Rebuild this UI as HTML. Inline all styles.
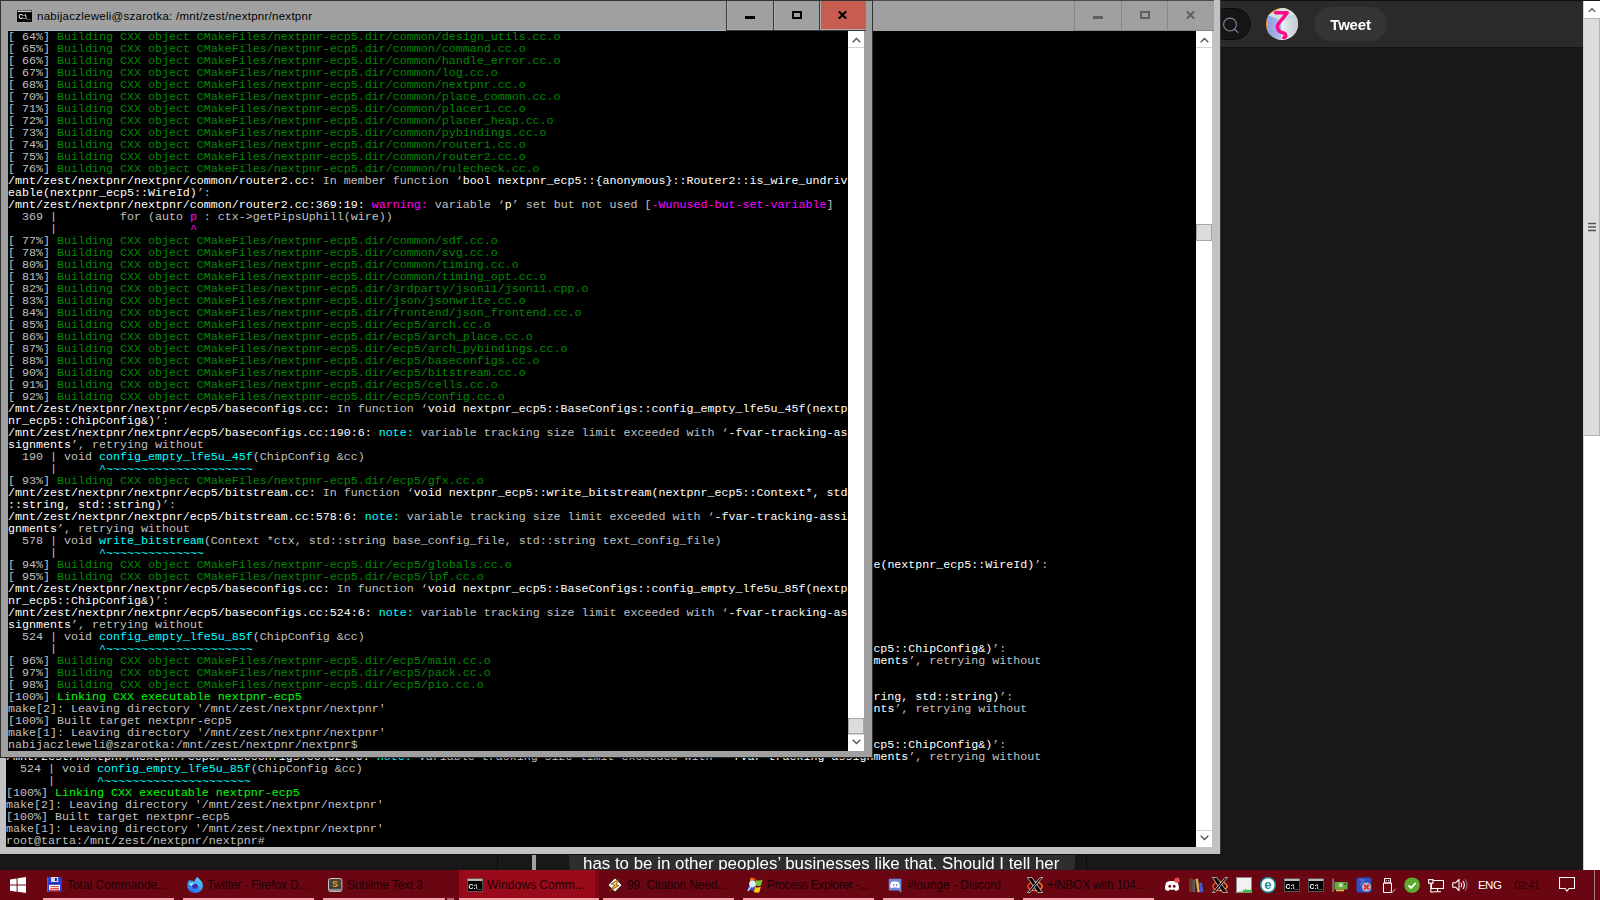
<!DOCTYPE html>
<html lang="en"><head><meta charset="utf-8"><title>nabijaczleweli@szarotka: /mnt/zest/nextpnr/nextpnr</title>
<style>
html,body{margin:0;padding:0}
body{width:1600px;height:900px;overflow:hidden;position:relative;background:#181818;font-family:"Liberation Sans",sans-serif}
.abs,.abs>*{position:absolute}
/* firefox / twitter behind */
#ff{left:0;top:0;width:1600px;height:870px;background:#181818}
#ffhead{left:0;top:0;width:1583px;height:48px;background:#2a2a2a;border-top:1px solid #0e0e0e;border-bottom:1px solid #131313;box-sizing:border-box}
#search{left:1100px;top:8px;width:151px;height:32px;border-radius:16px;background:#161616;border:1px solid #0b0b0b;box-sizing:border-box}
#tweet{left:1314px;top:7px;width:73px;height:34px;border-radius:17px;background:#343434;color:#fff;font-weight:bold;font-size:15px;line-height:35px;text-align:center;letter-spacing:-.2px}
#ffsb{left:1583px;top:1px;width:17px;height:869px;background:#fff;border-left:1px solid #cfcfcf;box-sizing:border-box}
#ffthumb{left:0;top:17px;width:16px;height:418px;background:#dcdcdc;border:1px solid #b4b4b4;border-left:0;box-sizing:border-box}
#sub{left:569px;top:838px;width:506px;height:35px;border-radius:8px;background:#2e2e2e;color:#fff;font-size:16.9px;line-height:24px;white-space:pre;overflow:hidden}
#sub span{position:absolute;left:14px;top:14px}
#sub,#tweet{filter:brightness(1)}
/* windows */
.win{box-sizing:border-box}
.term{background:#000;color:#c0c0c0;font:11.665px/12px "Liberation Mono",monospace;overflow:hidden}
.term .r{height:12px;line-height:12px;white-space:pre}
.term b{font-weight:normal}
.term .t{position:relative;top:1px}
.w{color:#fff}.g{color:#008a00}.G{color:#00ff00}.m{color:#ff00ff}.c{color:#00ffff}
#back{left:0;top:0;width:1221px;height:855px;background:#c2c2c2;border-right:1px solid #3a3a3a;border-bottom:1px solid #101010}
#backtitle{left:0;top:0;width:1214px;height:31px;background:#a0a0a0;border-top:1px solid #4a4a55;box-sizing:border-box}
#backterm{left:6px;top:31px;width:1190px;height:816px}
#backterm .r{position:absolute;left:0}
#frontterm .r{position:static}
#front{left:0;top:0;width:873px;height:758px;border-bottom:1px solid #2a2a2a;border-right:1px solid #333;background:#a0a0a0;border-left:1px solid #333;border-top:1px solid #333;box-sizing:border-box}
#frontterm{left:7px;top:30px;width:840px;height:720px}
.sb{background:#fff;width:16px}
.sb i{position:absolute;left:0;width:16px;box-sizing:border-box}
.thumb{background:#dcdcdc;border:1px solid #a6a6a6}
.sb .ln{height:1px;background:#d4d4d4;width:100%}
.cap svg,.sb svg{position:absolute}
.cap{position:absolute;top:0;height:30px;border-left:1px solid #6a6a6a;border-bottom:1px solid #6a6a6a;box-sizing:border-box}
#front .cap{border-color:#3a3a3a;box-shadow:inset 1px -1px 0 #adadad}
#back .cap{border-color:#87878c}
#title{left:36px;top:8px;font-size:11.5px;letter-spacing:.26px;line-height:15px;color:#000;white-space:pre}
/* taskbar */
#tb{left:0;top:870px;width:1600px;height:30px;background:#6a0512}
.tbtn{top:0;width:140px;height:30px}
.tbtn u{position:absolute;left:4px;right:5.4px;bottom:0;height:2px;background:#f4a6ac;text-decoration:none}
.tbtn span{position:absolute;left:28px;top:8px;font-size:12px;line-height:15px;color:#1a0206;white-space:pre}
.tbtn svg{position:absolute}
.tbtn div{position:absolute}
.tt{top:8px;font-size:12px;line-height:15px;white-space:pre}
</style></head><body>
<div id="ff" class="abs">
 <div id="ffhead"></div>
 <div id="search"></div>
 <svg style="left:1221px;top:14px" width="22" height="22" viewBox="0 0 22 22"><circle cx="9" cy="10.5" r="6.4" fill="none" stroke="#7b8c9e" stroke-width="1.05"/><path d="M13.4 15.2L17 18.4" stroke="#7b8c9e" stroke-width="1.15" stroke-linecap="round"/></svg>
 <svg style="left:1266px;top:8px" width="32" height="32" viewBox="0 0 32 32"><defs><clipPath id="av"><circle cx="16" cy="16" r="16"/></clipPath><linearGradient id="lf" x1="0" y1="0" x2="1" y2="0"><stop offset="0" stop-color="#8e9be0"/><stop offset="1" stop-color="#b4c2ee"/></linearGradient><linearGradient id="rf" x1="0" y1="0" x2="1" y2="0"><stop offset="0" stop-color="#eef4f8"/><stop offset=".45" stop-color="#d6dde2"/><stop offset="1" stop-color="#c2ccd4"/></linearGradient></defs><g clip-path="url(#av)"><rect width="32" height="32" fill="#e8962e"/><path d="M1.5 7L17 -1L32 6L32 27L15.5 33L1.5 26.5Z" fill="#cfe3e0"/><path d="M1.5 7L15.5 13L15.5 33L1.5 26.5Z" fill="url(#lf)"/><path d="M15.5 13L32 6L32 27L15.5 33Z" fill="url(#rf)"/><path d="M1.5 7L15.5 13L32 6" fill="none" stroke="#a9c3dc" stroke-width=".8"/><path d="M9.6 4.8H21.2L12.6 15.5C9.8 19.5 12.5 24 16.5 24.8C20.5 25.6 20.6 29 17.8 29.8" fill="none" stroke="#ff0a8c" stroke-width="3.5" stroke-linejoin="round" stroke-linecap="round"/></g></svg>
 <div id="tweet">Tweet</div>
 <div id="ffsb" class="abs"><div id="ffthumb"></div>
  <svg style="left:3.5px;top:6px" width="8" height="6" viewBox="0 0 8 6"><path d="M.7 4.9L4 1.6L7.3 4.9" fill="none" stroke="#4a4a4a" stroke-width="1.2"/></svg>
  <svg style="left:4px;top:221px" width="8" height="10" viewBox="0 0 8 10"><path d="M0 1.5H8M0 5H8M0 8.5H8" stroke="#555" stroke-width="1.6"/></svg>
 </div>
 <div style="left:532px;top:855px;width:4px;height:15px;background:#a2a2a2"></div>
 <div style="left:497px;top:855px;width:1px;height:15px;background:#0a0a0a"></div>
 <div style="left:1086px;top:855px;width:1px;height:15px;background:#0a0a0a"></div>
 <div id="sub"><span>has to be in other peoples&#8217; businesses like that. Should I tell her</span></div>
</div>

<div id="back" class="abs win">
 <div id="backtitle" class="abs">
  <div class="cap" style="left:1074px;width:47px"><svg style="left:18px;top:15px" width="10" height="3"><rect width="10" height="3" fill="#606060"/></svg></div>
  <div class="cap" style="left:1121px;width:46px"><svg style="left:18px;top:10px" width="10" height="8"><rect x="1" y="1" width="8" height="6" fill="none" stroke="#606060" stroke-width="2"/></svg></div>
  <div class="cap" style="left:1167px;width:47px"><svg style="left:18px;top:10px" width="9" height="8" viewBox="0 0 9 8"><path d="M.8 .3L8.2 7.7M8.2 .3L.8 7.7" stroke="#606060" stroke-width="2.1"/></svg></div>
 </div>
 <div id="backterm" class="term abs">
<div class="r" style="top:528px"><b class="w">/mnt/zest/nextpnr/nextpnr/common/router2.cc:</b> In member function ‘<b class="w">bool nextpnr_ecp5::{anonymous}::Router2::is_wire_undriveable(nextpnr_ecp5::WireId)</b>’:</div>
<div class="r" style="top:612px"><b class="w">/mnt/zest/nextpnr/nextpnr/ecp5/baseconfigs.cc:</b> In function ‘<b class="w">void nextpnr_ecp5::BaseConfigs::config_empty_lfe5u_45f(nextpnr_ecp5::ChipConfig&amp;)</b>’:</div>
<div class="r" style="top:624px"><b class="w">/mnt/zest/nextpnr/nextpnr/ecp5/baseconfigs.cc:190:6:</b> <b class="c">note:</b> variable tracking size limit exceeded with ‘<b class="w">-fvar-tracking-assignments</b>’, retrying without</div>
<div class="r" style="top:660px"><b class="w">/mnt/zest/nextpnr/nextpnr/ecp5/bitstream.cc:</b> In function ‘<b class="w">void nextpnr_ecp5::write_bitstream(nextpnr_ecp5::Context*, std::string, std::string)</b>’:</div>
<div class="r" style="top:672px"><b class="w">/mnt/zest/nextpnr/nextpnr/ecp5/bitstream.cc:578:6:</b> <b class="c">note:</b> variable tracking size limit exceeded with ‘<b class="w">-fvar-tracking-assignments</b>’, retrying without</div>
<div class="r" style="top:708px"><b class="w">/mnt/zest/nextpnr/nextpnr/ecp5/baseconfigs.cc:</b> In function ‘<b class="w">void nextpnr_ecp5::BaseConfigs::config_empty_lfe5u_85f(nextpnr_ecp5::ChipConfig&amp;)</b>’:</div>
<div class="r" style="top:720px"><b class="w">/mnt/zest/nextpnr/nextpnr/ecp5/baseconfigs.cc:524:6:</b> <b class="c">note:</b> variable tracking size limit exceeded with ‘<b class="w">-fvar-tracking-assignments</b>’, retrying without</div>
<div class="r" style="top:732px">  524 | void <b class="c">config_empty_lfe5u_85f</b>(ChipConfig &amp;cc)</div>
<div class="r" style="top:744px">      |      <b class="c">^</b><b class="c t">~~~~~~~~~~~~~~~~~~~~~</b></div>
<div class="r" style="top:756px">[100%] <b class="G">Linking CXX executable nextpnr-ecp5</b></div>
<div class="r" style="top:768px">make[2]: Leaving directory '/mnt/zest/nextpnr/nextpnr'</div>
<div class="r" style="top:780px">[100%] Built target nextpnr-ecp5</div>
<div class="r" style="top:792px">make[1]: Leaving directory '/mnt/zest/nextpnr/nextpnr'</div>
<div class="r" style="top:804px">root@tarta:/mnt/zest/nextpnr/nextpnr#</div>
 </div>
 <div class="sb abs" style="left:1196px;top:31px;height:816px;width:16px">
  <i class="thumb" style="top:193px;height:17px;width:16px"></i><i class="ln" style="top:16px"></i><i class="ln" style="top:799px"></i>
  <svg style="left:4px;top:6px" width="9" height="6" viewBox="0 0 9 6"><path d="M.7 5.3L4.5 1.5L8.3 5.3" fill="none" stroke="#505050" stroke-width="1.3"/></svg>
  <svg style="left:4px;top:804px" width="9" height="6" viewBox="0 0 9 6"><path d="M.7 .7L4.5 4.5L8.3 .7" fill="none" stroke="#505050" stroke-width="1.3"/></svg>
 </div>
</div>

<div id="front" class="abs win">
 <svg style="left:16px;top:9px;filter:brightness(1)" width="15" height="12" viewBox="0 0 15 12"><rect width="15" height="12" fill="#000"/><rect x=".5" y=".5" width="14" height="1.6" fill="#c8c8c8"/><text x="1.4" y="9.4" font-family="Liberation Sans,sans-serif" font-size="6.4" font-weight="bold" fill="#fff" opacity=".99" textLength="12" lengthAdjust="spacingAndGlyphs">C:\_</text></svg>
 <div id="title">nabijaczleweli@szarotka: /mnt/zest/nextpnr/nextpnr</div>
 <div class="cap" style="left:725px;width:47px"><svg style="left:18px;top:15px" width="10" height="3"><rect width="10" height="3" fill="#000"/></svg></div>
  <div class="cap" style="left:772px;width:46px"><svg style="left:18px;top:10px" width="10" height="8"><rect x="1" y="1" width="8" height="6" fill="none" stroke="#000" stroke-width="2"/></svg></div>
  <div class="cap" style="left:818px;width:47px;background:#c75c50"><svg style="left:18px;top:10px" width="9" height="8" viewBox="0 0 9 8"><path d="M.8 .3L8.2 7.7M8.2 .3L.8 7.7" stroke="#000" stroke-width="2.1"/></svg></div>
 <div style="left:7px;top:29px;width:718px;height:1px;background:#a6b6ca"></div>
 <div id="frontterm" class="term abs">
<div class="r">[ 64%] <b class="g">Building CXX object CMakeFiles/nextpnr-ecp5.dir/common/design_utils.cc.o</b></div>
<div class="r">[ 65%] <b class="g">Building CXX object CMakeFiles/nextpnr-ecp5.dir/common/command.cc.o</b></div>
<div class="r">[ 66%] <b class="g">Building CXX object CMakeFiles/nextpnr-ecp5.dir/common/handle_error.cc.o</b></div>
<div class="r">[ 67%] <b class="g">Building CXX object CMakeFiles/nextpnr-ecp5.dir/common/log.cc.o</b></div>
<div class="r">[ 68%] <b class="g">Building CXX object CMakeFiles/nextpnr-ecp5.dir/common/nextpnr.cc.o</b></div>
<div class="r">[ 70%] <b class="g">Building CXX object CMakeFiles/nextpnr-ecp5.dir/common/place_common.cc.o</b></div>
<div class="r">[ 71%] <b class="g">Building CXX object CMakeFiles/nextpnr-ecp5.dir/common/placer1.cc.o</b></div>
<div class="r">[ 72%] <b class="g">Building CXX object CMakeFiles/nextpnr-ecp5.dir/common/placer_heap.cc.o</b></div>
<div class="r">[ 73%] <b class="g">Building CXX object CMakeFiles/nextpnr-ecp5.dir/common/pybindings.cc.o</b></div>
<div class="r">[ 74%] <b class="g">Building CXX object CMakeFiles/nextpnr-ecp5.dir/common/router1.cc.o</b></div>
<div class="r">[ 75%] <b class="g">Building CXX object CMakeFiles/nextpnr-ecp5.dir/common/router2.cc.o</b></div>
<div class="r">[ 76%] <b class="g">Building CXX object CMakeFiles/nextpnr-ecp5.dir/common/rulecheck.cc.o</b></div>
<div class="r"><b class="w">/mnt/zest/nextpnr/nextpnr/common/router2.cc:</b> In member function ‘<b class="w">bool nextpnr_ecp5::{anonymous}::Router2::is_wire_undriv</b></div>
<div class="r"><b class="w">eable(nextpnr_ecp5::WireId)</b>’:</div>
<div class="r"><b class="w">/mnt/zest/nextpnr/nextpnr/common/router2.cc:369:19:</b> <b class="m">warning:</b> variable ‘<b class="w">p</b>’ set but not used [<b class="m">-Wunused-but-set-variable</b>]</div>
<div class="r">  369 |         for (auto <b class="m">p</b> : ctx-&gt;getPipsUphill(wire))</div>
<div class="r">      |                   <b class="m">^</b></div>
<div class="r">[ 77%] <b class="g">Building CXX object CMakeFiles/nextpnr-ecp5.dir/common/sdf.cc.o</b></div>
<div class="r">[ 78%] <b class="g">Building CXX object CMakeFiles/nextpnr-ecp5.dir/common/svg.cc.o</b></div>
<div class="r">[ 80%] <b class="g">Building CXX object CMakeFiles/nextpnr-ecp5.dir/common/timing.cc.o</b></div>
<div class="r">[ 81%] <b class="g">Building CXX object CMakeFiles/nextpnr-ecp5.dir/common/timing_opt.cc.o</b></div>
<div class="r">[ 82%] <b class="g">Building CXX object CMakeFiles/nextpnr-ecp5.dir/3rdparty/json11/json11.cpp.o</b></div>
<div class="r">[ 83%] <b class="g">Building CXX object CMakeFiles/nextpnr-ecp5.dir/json/jsonwrite.cc.o</b></div>
<div class="r">[ 84%] <b class="g">Building CXX object CMakeFiles/nextpnr-ecp5.dir/frontend/json_frontend.cc.o</b></div>
<div class="r">[ 85%] <b class="g">Building CXX object CMakeFiles/nextpnr-ecp5.dir/ecp5/arch.cc.o</b></div>
<div class="r">[ 86%] <b class="g">Building CXX object CMakeFiles/nextpnr-ecp5.dir/ecp5/arch_place.cc.o</b></div>
<div class="r">[ 87%] <b class="g">Building CXX object CMakeFiles/nextpnr-ecp5.dir/ecp5/arch_pybindings.cc.o</b></div>
<div class="r">[ 88%] <b class="g">Building CXX object CMakeFiles/nextpnr-ecp5.dir/ecp5/baseconfigs.cc.o</b></div>
<div class="r">[ 90%] <b class="g">Building CXX object CMakeFiles/nextpnr-ecp5.dir/ecp5/bitstream.cc.o</b></div>
<div class="r">[ 91%] <b class="g">Building CXX object CMakeFiles/nextpnr-ecp5.dir/ecp5/cells.cc.o</b></div>
<div class="r">[ 92%] <b class="g">Building CXX object CMakeFiles/nextpnr-ecp5.dir/ecp5/config.cc.o</b></div>
<div class="r"><b class="w">/mnt/zest/nextpnr/nextpnr/ecp5/baseconfigs.cc:</b> In function ‘<b class="w">void nextpnr_ecp5::BaseConfigs::config_empty_lfe5u_45f(nextp</b></div>
<div class="r"><b class="w">nr_ecp5::ChipConfig&amp;)</b>’:</div>
<div class="r"><b class="w">/mnt/zest/nextpnr/nextpnr/ecp5/baseconfigs.cc:190:6:</b> <b class="c">note:</b> variable tracking size limit exceeded with ‘<b class="w">-fvar-tracking-as</b></div>
<div class="r"><b class="w">signments</b>’, retrying without</div>
<div class="r">  190 | void <b class="c">config_empty_lfe5u_45f</b>(ChipConfig &amp;cc)</div>
<div class="r">      |      <b class="c">^</b><b class="c t">~~~~~~~~~~~~~~~~~~~~~</b></div>
<div class="r">[ 93%] <b class="g">Building CXX object CMakeFiles/nextpnr-ecp5.dir/ecp5/gfx.cc.o</b></div>
<div class="r"><b class="w">/mnt/zest/nextpnr/nextpnr/ecp5/bitstream.cc:</b> In function ‘<b class="w">void nextpnr_ecp5::write_bitstream(nextpnr_ecp5::Context*, std</b></div>
<div class="r"><b class="w">::string, std::string)</b>’:</div>
<div class="r"><b class="w">/mnt/zest/nextpnr/nextpnr/ecp5/bitstream.cc:578:6:</b> <b class="c">note:</b> variable tracking size limit exceeded with ‘<b class="w">-fvar-tracking-assi</b></div>
<div class="r"><b class="w">gnments</b>’, retrying without</div>
<div class="r">  578 | void <b class="c">write_bitstream</b>(Context *ctx, std::string base_config_file, std::string text_config_file)</div>
<div class="r">      |      <b class="c">^</b><b class="c t">~~~~~~~~~~~~~~</b></div>
<div class="r">[ 94%] <b class="g">Building CXX object CMakeFiles/nextpnr-ecp5.dir/ecp5/globals.cc.o</b></div>
<div class="r">[ 95%] <b class="g">Building CXX object CMakeFiles/nextpnr-ecp5.dir/ecp5/lpf.cc.o</b></div>
<div class="r"><b class="w">/mnt/zest/nextpnr/nextpnr/ecp5/baseconfigs.cc:</b> In function ‘<b class="w">void nextpnr_ecp5::BaseConfigs::config_empty_lfe5u_85f(nextp</b></div>
<div class="r"><b class="w">nr_ecp5::ChipConfig&amp;)</b>’:</div>
<div class="r"><b class="w">/mnt/zest/nextpnr/nextpnr/ecp5/baseconfigs.cc:524:6:</b> <b class="c">note:</b> variable tracking size limit exceeded with ‘<b class="w">-fvar-tracking-as</b></div>
<div class="r"><b class="w">signments</b>’, retrying without</div>
<div class="r">  524 | void <b class="c">config_empty_lfe5u_85f</b>(ChipConfig &amp;cc)</div>
<div class="r">      |      <b class="c">^</b><b class="c t">~~~~~~~~~~~~~~~~~~~~~</b></div>
<div class="r">[ 96%] <b class="g">Building CXX object CMakeFiles/nextpnr-ecp5.dir/ecp5/main.cc.o</b></div>
<div class="r">[ 97%] <b class="g">Building CXX object CMakeFiles/nextpnr-ecp5.dir/ecp5/pack.cc.o</b></div>
<div class="r">[ 98%] <b class="g">Building CXX object CMakeFiles/nextpnr-ecp5.dir/ecp5/pio.cc.o</b></div>
<div class="r">[100%] <b class="G">Linking CXX executable nextpnr-ecp5</b></div>
<div class="r">make[2]: Leaving directory '/mnt/zest/nextpnr/nextpnr'</div>
<div class="r">[100%] Built target nextpnr-ecp5</div>
<div class="r">make[1]: Leaving directory '/mnt/zest/nextpnr/nextpnr'</div>
<div class="r">nabijaczleweli@szarotka:/mnt/zest/nextpnr/nextpnr$</div>
 </div>
 <div class="sb abs" style="left:847px;top:30px;height:720px">
  <i class="thumb" style="top:687px;height:16px"></i><i class="ln" style="top:16px"></i><i class="ln" style="top:703px"></i>
  <svg style="left:4px;top:6px" width="9" height="6" viewBox="0 0 9 6"><path d="M.7 5.3L4.5 1.5L8.3 5.3" fill="none" stroke="#505050" stroke-width="1.3"/></svg>
  <svg style="left:4px;top:708px" width="9" height="6" viewBox="0 0 9 6"><path d="M.7 .7L4.5 4.5L8.3 .7" fill="none" stroke="#505050" stroke-width="1.3"/></svg>
 </div>
</div>

<div id="tb" class="abs">
<svg style="left:10px;top:7px;filter:brightness(1)" width="16" height="16" viewBox="0 0 16 16"><path d="M0 2.4L6.6 1.4V7.6H0ZM7.6 1.25L16 0V7.6H7.6ZM0 8.5H6.6V14.7L0 13.7ZM7.6 8.5H16V16L7.6 14.8Z" fill="#fff"/></svg>
<div class="tbtn" style="left:39px"><u></u><svg style="left:8px;top:7px;filter:brightness(1)" width="16" height="16" viewBox="0 0 16 16"><defs><linearGradient id="tcl" x1="0" y1="0" x2="0" y2="1"><stop offset="0" stop-color="#fff"/><stop offset=".62" stop-color="#fff"/><stop offset=".7" stop-color="#d8606a"/><stop offset="1" stop-color="#8a1820"/></linearGradient></defs><path d="M0 0H13.6L15 1.4V15H0Z" fill="#2c3cd2"/><rect x="0" y="0" width="1.2" height="15" fill="#4c60ea"/><rect x="4" y="0" width="7.2" height="5" fill="#d6d6d2"/><rect x="8" y="1" width="1.8" height="3" fill="#1418c0"/><rect x="1.5" y="6.4" width="11.5" height="1.2" fill="#1a22a8"/><rect x="2" y="7.8" width="11" height="7.2" fill="url(#tcl)"/><path d="M3.3 9.6H12M3.3 11.6H12" stroke="#dc3c48" stroke-width="1"/></svg><span style="letter-spacing:-0.042px">Total Commande...</span></div>
<div class="tbtn" style="left:179px"><u></u><svg style="left:8px;top:7px;filter:brightness(1)" width="16" height="16" viewBox="0 0 16 16"><defs><linearGradient id="ffg" x1=".8" y1="0" x2=".3" y2="1"><stop offset="0" stop-color="#4fdcff"/><stop offset=".5" stop-color="#36a4f6"/><stop offset="1" stop-color="#2a66e6"/></linearGradient></defs><path d="M8 16C3 16 0 12.2 .2 8.2C.3 5.6 1.4 3.7 2.5 3C2.9 3.7 3.3 3.6 3.7 3.3C4.2 3.9 4.9 3.7 5.3 3.4C5.8 4.2 6.6 4.7 7.5 4.5C8 2.6 9 1 10.6 0C11.4 1.7 13.5 2.9 14.7 4.7C15.9 6.5 16.1 8.7 15.7 10.5C14.9 13.7 12 16 8 16Z" fill="url(#ffg)"/><path d="M2.2 6.2C4 5.6 6.6 5.9 8.2 6.9C6.6 7 5.2 7.6 4.8 9C3.4 8.6 2.4 7.4 2.2 6.2Z" fill="#a9ecff"/><ellipse cx="8.2" cy="9.2" rx="3" ry="2.5" fill="#3c2cb2"/><path d="M10 6.2C11.4 6.6 12 8 11.6 9.6C11.2 8.2 10.6 7 10 6.2Z" fill="#b9f2ff"/></svg><span style="letter-spacing:-0.168px">Twitter - Firefox D...</span></div>
<div class="tbtn" style="left:319px"><u style="right:14px"></u><u style="left:128px;right:5px;background:#b97078"></u><svg style="left:8px;top:7px;filter:brightness(1)" width="16" height="16" viewBox="0 0 16 16"><rect x="1.5" y="1.5" width="13.4" height="13" rx="2" fill="#48443c" stroke="#d8d8d8" stroke-width=".9"/><rect x="2" y="11.2" width="12.4" height="3" fill="#8a8a86"/><rect x="2" y="10.6" width="12.4" height="1" fill="#2a2a2a"/><text x="8.2" y="9.8" text-anchor="middle" font-family="Liberation Sans,sans-serif" font-size="8.6" font-weight="bold" fill="#ff9a20">S</text></svg><span style="letter-spacing:-0.214px">Sublime Text 3</span></div>
<div class="tbtn" style="left:459px"><div style="left:0;top:0;width:136px;height:30px;background:#990a1a"></div><div style="left:136px;top:0;width:4px;height:30px;background:#7c0716"></div><u style="left:0;right:0"></u><svg style="left:8px;top:7px;filter:brightness(1)" width="16" height="16" viewBox="0 0 16 16"><rect width="16" height="13" y="1.5" fill="#000"/><rect x=".5" y="2" width="15" height="2" fill="#b8b8b8"/><rect x=".25" y="1.75" width="15.5" height="12.5" fill="none" stroke="#9a9a9a" stroke-width=".5"/><text x="1.6" y="11.6" font-family="Liberation Sans,sans-serif" font-size="6.6" font-weight="bold" fill="#fff" opacity=".99" textLength="12.6" lengthAdjust="spacingAndGlyphs">C:\_</text></svg><span style="letter-spacing:0.043px">Windows Comm...</span></div>
<div class="tbtn" style="left:599px"><u></u><svg style="left:8px;top:7px;filter:brightness(1)" width="16" height="16" viewBox="0 0 16 16"><path d="M8 1L14.8 8L8 15L1.2 8Z" fill="#fff" stroke="#2a1a1a" stroke-width=".8"/><path d="M13.4 1.6L4.2 6.8L7.4 8.2L1.6 14.8L11.8 8.6L8.8 7.2Z" fill="#ffa41c" stroke="#3a1a00" stroke-width=".6"/><path d="M9.5 4.4L6 7L8.6 7.8Z" fill="#ffe9a8"/></svg><span style="letter-spacing:-0.137px">99. Citation Need...</span></div>
<div class="tbtn" style="left:739px"><u></u><svg style="left:8px;top:7px;filter:brightness(1)" width="16" height="16" viewBox="0 0 16 16"><defs><linearGradient id="pxr" x1="0" y1="0" x2="1" y2="0"><stop offset="0" stop-color="#ff9a1a"/><stop offset="1" stop-color="#e8341a"/></linearGradient></defs><path d="M3.4 1.2C5 .6 7 .8 8.8 2L8 7C6.4 6 4.4 5.6 2.6 6.2Z" fill="url(#pxr)"/><path d="M9.2 3C11 4 13.4 3.6 15.6 2.6L14 8.4C12.2 9.2 10.2 9.2 8.4 8.2Z" fill="#78c232"/><path d="M2 8C3.8 7.4 5.8 7.8 7.6 9L6.6 14.2C5 13.2 2.8 12.6 .6 13.2Z" fill="#2f52d8"/><path d="M8 10C9.8 10.8 11.8 10.6 13.8 9.8L12.4 15.2C10.6 16 8.6 15.8 6.8 14.8Z" fill="#f6c81a"/><circle cx="5.6" cy="7" r="3.3" fill="#dff3ff" stroke="#a9d0f0" stroke-width=".6"/><path d="M3.6 10L1.2 13.4" stroke="#c8d8f8" stroke-width="1.6" stroke-linecap="round"/></svg><span style="letter-spacing:-0.367px">Process Explorer -...</span></div>
<div class="tbtn" style="left:879px"><u></u><svg style="left:8px;top:7px;filter:brightness(1)" width="16" height="16" viewBox="0 0 16 16"><path d="M2.2 1.8H13.9Q14.3 1.8 14.3 2.2V15.4L11.4 13.4H2.2Q1.8 13.4 1.8 13V2.2Q1.8 1.8 2.2 1.8Z" fill="#7289da"/><path d="M4.6 5C6 4.2 10 4.2 11.4 5C12.6 6.8 13 8.8 12.8 10.2C12 11 11 11.2 10.4 11L9.9 10.2C9 10.5 7 10.5 6.1 10.2L5.6 11C5 11.2 4 11 3.2 10.2C3 8.8 3.4 6.8 4.6 5Z" fill="#fff"/><ellipse cx="6.6" cy="8" rx=".8" ry="1.1" fill="#7289da"/><ellipse cx="9.6" cy="8" rx=".8" ry="1.1" fill="#7289da"/></svg><span style="letter-spacing:-0.004px">#lounge - Discord</span></div>
<div class="tbtn" style="left:1019px"><u></u><svg style="left:8px;top:7px;filter:brightness(1)" width="16" height="16" viewBox="0 0 16 16"><ellipse cx="8" cy="9.3" rx="7.2" ry="4.4" fill="none" stroke="#f0641e" stroke-width="1.2"/><path d="M8 13.7A7.2 4.4 0 0 0 8 4.9" fill="none" stroke="#f2a030" stroke-width=".9"/><path d="M.4 .4H4.8L15.6 15.6H10.8Z" fill="#050505" stroke="#f0f0f0" stroke-width=".7"/><path d="M13.2 .4H15.6L3 15.6H.4Z" fill="#050505" stroke="#f0f0f0" stroke-width=".7"/></svg><span style="letter-spacing:-0.244px">+INBOX with 104...</span></div>
<svg style="left:1164px;top:7px;filter:brightness(1)" width="16" height="16" viewBox="0 0 16 16"><path d="M2.6 5C4.6 3.5 11.4 3.5 13.4 5C14.8 7.4 15.2 10 14.8 12.4C13.4 13.6 12 14 11.2 13.8L10.4 12.4C9 12.8 7 12.8 5.6 12.4L4.8 13.8C4 14 2.6 13.6 1.2 12.4C.8 10 1.2 7.4 2.6 5Z" fill="#fff"/><ellipse cx="5.8" cy="9.2" rx="1.3" ry="1.5" fill="#6a0512"/><ellipse cx="10.2" cy="9.2" rx="1.3" ry="1.5" fill="#6a0512"/><circle cx="13" cy="3.2" r="2.6" fill="#f04747"/></svg>
<svg style="left:1188px;top:7px;filter:brightness(1)" width="16" height="16" viewBox="0 0 16 16"><rect x="1" y="1.5" width="3.4" height="13.5" fill="#6b3d1c"/><rect x="4.4" y="2.5" width="2.8" height="12.5" fill="#55606a"/><path d="M7.6 2L10 1.6L11.8 15L9.4 15.4Z" fill="#d6b25a"/><path d="M11 6L14 5.4L15.4 15L12.4 15.6Z" fill="#3c5ad8"/></svg>
<svg style="left:1212px;top:7px;filter:brightness(1)" width="16" height="16" viewBox="0 0 16 16"><ellipse cx="8" cy="9.3" rx="7.2" ry="4.4" fill="none" stroke="#f0641e" stroke-width="1.2"/><path d="M8 13.7A7.2 4.4 0 0 0 8 4.9" fill="none" stroke="#f2a030" stroke-width=".9"/><path d="M.4 .4H4.8L15.6 15.6H10.8Z" fill="#050505" stroke="#f0f0f0" stroke-width=".7"/><path d="M13.2 .4H15.6L3 15.6H.4Z" fill="#050505" stroke="#f0f0f0" stroke-width=".7"/></svg>
<svg style="left:1236px;top:7px;filter:brightness(1)" width="16" height="16" viewBox="0 0 16 16"><rect x=".5" y=".5" width="15" height="15" fill="#f2f2f2" stroke="#8a8a8a"/><path d="M3 15L4 14L5 15ZM6 15L7.5 12.6L8.6 13.6L9.6 11.4L10.8 13.4L12 12.2L13.2 13.6L14.4 12.4L15 13V15Z" fill="#2fbe3a"/></svg>
<svg style="left:1260px;top:7px;filter:brightness(1)" width="16" height="16" viewBox="0 0 16 16"><rect x=".8" y=".8" width="14.4" height="14.4" rx="6.6" fill="#fff" stroke="#1a8f9c" stroke-width="1.5"/><text x="8" y="12.2" text-anchor="middle" font-family="Liberation Sans,sans-serif" font-size="13.5" font-weight="bold" fill="#1a8f9c" opacity=".99">e</text></svg>
<svg style="left:1284px;top:7px;filter:brightness(1)" width="16" height="16" viewBox="0 0 16 16"><rect width="16" height="13" y="1.5" fill="#000"/><rect x=".5" y="2" width="15" height="2" fill="#b8b8b8"/><rect x=".25" y="1.75" width="15.5" height="12.5" fill="none" stroke="#9a9a9a" stroke-width=".5"/><text x="1.6" y="11.6" font-family="Liberation Sans,sans-serif" font-size="6.6" font-weight="bold" fill="#fff" opacity=".99" textLength="12.6" lengthAdjust="spacingAndGlyphs">C:\_</text></svg>
<svg style="left:1308px;top:7px;filter:brightness(1)" width="16" height="16" viewBox="0 0 16 16"><rect width="16" height="13" y="1.5" fill="#000"/><rect x=".5" y="2" width="15" height="2" fill="#b8b8b8"/><rect x=".25" y="1.75" width="15.5" height="12.5" fill="none" stroke="#9a9a9a" stroke-width=".5"/><text x="1.6" y="11.6" font-family="Liberation Sans,sans-serif" font-size="6.6" font-weight="bold" fill="#fff" opacity=".99" textLength="12.6" lengthAdjust="spacingAndGlyphs">C:\_</text></svg>
<svg style="left:1332px;top:7px;filter:brightness(1)" width="16" height="16" viewBox="0 0 16 16"><path d="M1 1.5V15" stroke="#8a8a8a" stroke-width="1.4"/><rect x="2.5" y="5" width="13" height="7.5" fill="#5fae3c"/><rect x="4" y="12.5" width="8" height="1.8" fill="#d7b648"/><rect x="7" y="6.4" width="3.6" height="3.6" fill="#cfd6cf"/><rect x="12" y="6" width="2" height="2" fill="#3a6a28"/></svg>
<svg style="left:1356px;top:7px;filter:brightness(1)" width="16" height="16" viewBox="0 0 16 16"><rect x=".5" y=".5" width="15" height="15" rx="2" fill="#2c50c0"/><path d="M3 3H8L4 8" stroke="#5d7fe0" stroke-width="1.2" fill="none"/><circle cx="10.4" cy="10" r="4.6" fill="#b9b9c4"/><path d="M8 7.6L12.8 12.4M12.8 7.6L8 12.4" stroke="#e02828" stroke-width="1.8"/></svg>
<svg style="left:1380px;top:7px;filter:brightness(1)" width="16" height="16" viewBox="0 0 16 16"><path d="M4.5 1.5H10.5V6H4.5ZM3.5 6H11.5V15.5H3.5Z" fill="none" stroke="#fff" stroke-width="1"/><path d="M6.3 3.2V4.3M8.7 3.2V4.3" stroke="#fff" stroke-width="1.1"/><path d="M10.5 13.6L12.3 15.4L15.6 11.8" fill="none" stroke="#e8d8da" stroke-width=".9"/><rect x="9.5" y="11" width="3" height="5" fill="#6a0512" opacity=".0"/></svg>
<svg style="left:1404px;top:7px;filter:brightness(1)" width="16" height="16" viewBox="0 0 16 16"><path d="M8 .4C12.5 .2 16 3.4 15.8 8C15.8 12.6 12.4 16 8 15.8C3.4 15.8 .2 12.6 .4 8C.3 3.6 3.4 .5 8 .4Z" fill="#5bab2c"/><path d="M4.4 8.4L7 10.8L11.8 5.8" fill="none" stroke="#fff" stroke-width="1.9"/></svg>
<svg style="left:1428px;top:7px;filter:brightness(1)" width="16" height="16" viewBox="0 0 16 16"><path d="M3.5 3.5H15.5V11.5H3.5Z" fill="none" stroke="#fff" stroke-width="1.1"/><path d="M9.5 11.5V14.5M6 14.8H13" stroke="#fff" stroke-width="1.1"/><rect x=".6" y="2.6" width="4.4" height="3.6" fill="#6a0512" stroke="#fff" stroke-width="1.1"/><path d="M2.8 6.2V15H6" fill="none" stroke="#fff" stroke-width="1.1"/></svg>
<svg style="left:1452px;top:7px;filter:brightness(1)" width="16" height="16" viewBox="0 0 16 16"><path d="M.8 5.8H3.6L7 2.4V13.6L3.6 10.2H.8Z" fill="none" stroke="#fff" stroke-width="1.1" stroke-linejoin="round"/><path d="M9 5.8Q10.6 8 9 10.2" fill="none" stroke="#fff" stroke-width="1.1"/><path d="M11 4Q13.8 8 11 12" fill="none" stroke="#fff" stroke-width="1.1"/><path d="M13.2 2.2Q16.8 8 13.2 13.8" fill="none" stroke="#b9828a" stroke-width=".9"/></svg>
<div class="tt" style="left:1478px;color:#fff;font-size:11.5px;letter-spacing:-.55px">ENG</div>
<div class="tt" style="left:1514px;color:#2a0308;font-size:11.5px;letter-spacing:-.7px">02:41</div>
<svg style="left:1559px;top:7px;filter:brightness(1)" width="16" height="16" viewBox="0 0 16 16"><path d="M.5 .5H15.5V11.5H10L8 14L6 11.5H.5Z" fill="none" stroke="#fff" stroke-width="1.1"/></svg>
<div style="left:1594px;top:0;width:1px;height:30px;background:#a77a80"></div>
</div>
</body></html>
